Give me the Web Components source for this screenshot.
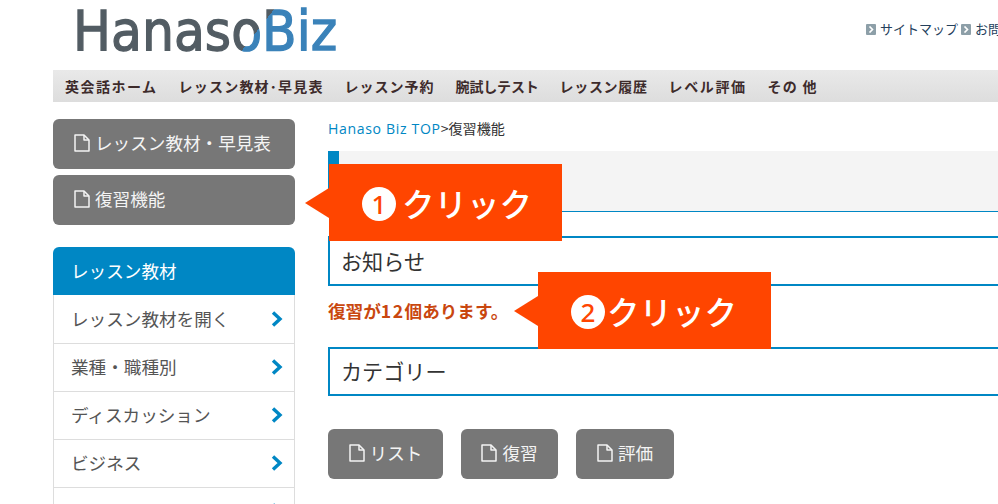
<!DOCTYPE html>
<html lang="ja"><head><meta charset="utf-8"><title>復習機能</title>
<style>
html,body{margin:0;padding:0;width:998px;height:504px;overflow:hidden;background:#fff}
body{font-family:"Noto Sans CJK JP","Noto Sans",sans-serif;color:#333}
hb-page{width:1200px}
</style></head><body>
<hb-page>
  <hb-header slot="header"></hb-header>
  <hb-nav slot="nav">
    <a style="letter-spacing:1.5px">英会話ホーム</a><a style="letter-spacing:1.2px">レッスン教材･早見表</a><a style="letter-spacing:1px">レッスン予約</a><a style="letter-spacing:-.17px">腕試しテスト</a><a style="letter-spacing:.67px">レッスン履歴</a><a style="letter-spacing:1.6px">レベル評価</a><a style="letter-spacing:1.2px">その 他</a>
  </hb-nav>
  <hb-sidebar slot="side">
    <hb-doc-button wide>レッスン教材・早見表</hb-doc-button>
    <hb-doc-button wide>復習機能</hb-doc-button>
    <hb-side-list title="レッスン教材">
      <hb-side-item>レッスン教材を開く</hb-side-item>
      <hb-side-item>業種・職種別</hb-side-item>
      <hb-side-item>ディスカッション</hb-side-item>
      <hb-side-item>ビジネス</hb-side-item>
      <hb-side-item></hb-side-item>
    </hb-side-list>
  </hb-sidebar>
  <hb-main slot="main">
    <hb-crumb><a>Hanaso Biz TOP</a>&gt;復習機能</hb-crumb>
    <hb-title></hb-title>
    <hb-box>お知らせ</hb-box>
    <hb-notice>復習が<span style="letter-spacing:1.5px">12</span>個あります。</hb-notice>
    <hb-box style="height:49px;line-height:45px">カテゴリー</hb-box>
    <hb-actions>
      <hb-doc-button style="width:115px">リスト</hb-doc-button>
      <hb-doc-button style="width:97px">復習</hb-doc-button>
      <hb-doc-button style="width:98px">評価</hb-doc-button>
    </hb-actions>
  </hb-main>
  <hb-callout slot="over" num="1" style="left:305px;top:164px;--g:6px"></hb-callout>
  <hb-callout slot="over" num="2" style="left:514px;top:272px;--g:2px"></hb-callout>
</hb-page>
<script>
function def(name,css,html,init){
  customElements.define(name,class extends HTMLElement{
    constructor(){super();const r=this.attachShadow({mode:'open'});r.innerHTML='<style>'+css+'</style>'+html;}
    connectedCallback(){if(init)init(this,this.shadowRoot);}
  });
}
const DOC='<svg class="doc" viewBox="0 0 16 18" width="16" height="18" fill="none" stroke="currentColor" stroke-width="1.5" stroke-linejoin="round"><path d="M1 1h9l5 5v11H1z"/><path d="M10 1v5h5"/></svg>';
const CHEV='<svg width="6" height="7" viewBox="0 0 6 7"><path d="M1.5 .5 4.5 3.5 1.5 6.5" fill="none" stroke="#fff" stroke-width="1.6"/></svg>';

def('hb-page',
 ':host{display:block;position:relative;height:504px}.row{display:flex;gap:33px;padding:17px 0 0 53px}',
 '<slot name="header"></slot><slot name="nav"></slot><div class="row"><slot name="side"></slot><slot name="main"></slot></div><slot name="over"></slot>');

def('hb-header',
 ':host{display:flex;height:70px;padding-left:73px;box-sizing:border-box}'+
 '.logo{display:block;margin-top:8px;flex:none;overflow:visible}'+
 '.links{display:flex;align-items:flex-start;gap:3px;margin-left:529px;padding-top:21px;font:13px/16px "Noto Sans CJK JP",sans-serif;color:#24405c;white-space:nowrap}'+
 '.l{display:flex;align-items:center;gap:4px}.i{width:10px;height:11px;background:#8d9fa8;border-radius:1px;display:flex;align-items:center;justify-content:center}',
 '<svg class="logo" width="264" height="44" viewBox="0 0 264 44"><defs><linearGradient id="lg" gradientUnits="userSpaceOnUse" x1="165" y1="3.2" x2="205" y2="37.2"><stop offset=".5" stop-color="#525c63"/><stop offset=".5" stop-color="#3a82b9"/></linearGradient></defs>'+
 '<text transform="scale(1,1.08)" x="0" y="38.9" font-family="DejaVu Sans" font-size="50.5" fill="url(#lg)" stroke="url(#lg)" stroke-width="1.2">HanasoBiz</text></svg>'+
 '<div class="links"><span class="l"><span class="i">'+CHEV+'</span>サイトマップ</span><span class="l"><span class="i">'+CHEV+'</span>お問い合わせ</span></div>');

def('hb-nav',
 ':host{display:flex;margin-left:53px;height:32px;width:945px;background:linear-gradient(#e9e9e9,#dddddd);align-items:center;padding-left:12px;box-sizing:border-box}'+
 '::slotted(a){font:700 14px/32px "Noto Sans CJK JP",sans-serif;color:#3d2b2b;white-space:nowrap;margin-right:21px}',
 '<slot></slot>');

def('hb-doc-button',
 ':host{display:flex;align-items:center;justify-content:center;gap:5px;height:50px;box-sizing:border-box;border-radius:6px;background:#777;color:#f4f4f4;font:400 17.6px/24px "Noto Sans CJK JP",sans-serif;white-space:nowrap;padding-bottom:2px}'+
 ':host([wide]){justify-content:flex-start;padding-left:21px;width:242px}.doc{flex:none}',
 DOC+'<slot></slot>');

def('hb-sidebar',
 ':host{display:flex;flex-direction:column;gap:6px;width:242px;flex:none}',
 '<slot></slot>');

def('hb-side-list',
 ':host{display:block;margin-top:16px}.h{height:48px;background:#0087c4;color:#fff;border-radius:6px 6px 0 0;padding-left:18px;font:400 17.6px/48px "Noto Sans CJK JP",sans-serif}'+
 '.b{border-left:1px solid #ddd;border-right:1px solid #ddd;padding-top:1px}',
 '<div class="h"></div><div class="b"><slot></slot></div>',
 (el,r)=>{r.querySelector('.h').textContent=el.getAttribute('title')});

def('hb-side-item',
 ':host{display:flex;height:48px;box-sizing:border-box;border-bottom:1px solid #ddd;align-items:center;justify-content:space-between;padding:0 11px 2px 17px;color:#555;font:400 17.6px/24px "Noto Sans CJK JP",sans-serif}'+
 'svg{flex:none}',
 '<span><slot></slot></span><svg width="12" height="16" viewBox="0 0 12 16" fill="none" stroke="#0087c4" stroke-width="3.4"><path d="M2 1.5 9 8 2 14.5"/></svg>');

def('hb-main',':host{display:block;flex:1;min-width:0}','<slot></slot>');

def('hb-crumb',
 ':host{display:block;height:32px;color:#333;font:400 14.08px/18px "Noto Sans CJK JP",sans-serif}'+
 '::slotted(a){color:#0087c4;font-family:"Open Sans",sans-serif;letter-spacing:.65px}',
 '<slot></slot>');

def('hb-title',
 ':host{display:block;height:61px;box-sizing:border-box;background:#f4f4f4;border-left:11px solid #0087c4;border-bottom:1px solid #0087c4;margin-bottom:24px}','');

def('hb-box',
 ':host{display:block;height:50px;box-sizing:border-box;border:2px solid #0087c4;padding-left:11px;color:#333;font:400 21.12px/46px "Noto Sans CJK JP",sans-serif}',
 '<slot></slot>');

def('hb-notice',
 ':host{display:block;height:61px;color:#c9470f;font:700 17.6px/50px "Noto Sans CJK JP",sans-serif}',
 '<slot></slot>');

def('hb-actions',
 ':host{display:flex;gap:18px;margin-top:33px}','<slot></slot>');

def('hb-callout',
 ':host{position:absolute;display:flex;align-items:center;height:77px}'+
 '.a{width:0;height:0;border-top:15px solid transparent;border-bottom:15px solid transparent;border-right:24px solid #ff4500}'+
 '.b{width:233px;height:77px;background:#ff4500;color:#fff;display:flex;align-items:center;padding-left:33px;box-sizing:border-box;gap:var(--g,4px)}'+
 '.n{width:34px;height:34px;border-radius:50%;background:#fff;color:#ff4500;font:500 26px/34px "Noto Sans",sans-serif;text-align:center;flex:none;margin-top:2px}'+
 '.t{font:500 32.5px/40px "Noto Sans CJK JP",sans-serif;white-space:nowrap}',
 '<div class="a"></div><div class="b"><span class="n"></span><span class="t">クリック</span></div>',
 (el,r)=>{r.querySelector('.n').textContent=el.getAttribute('num')});
</script>
</body></html>
